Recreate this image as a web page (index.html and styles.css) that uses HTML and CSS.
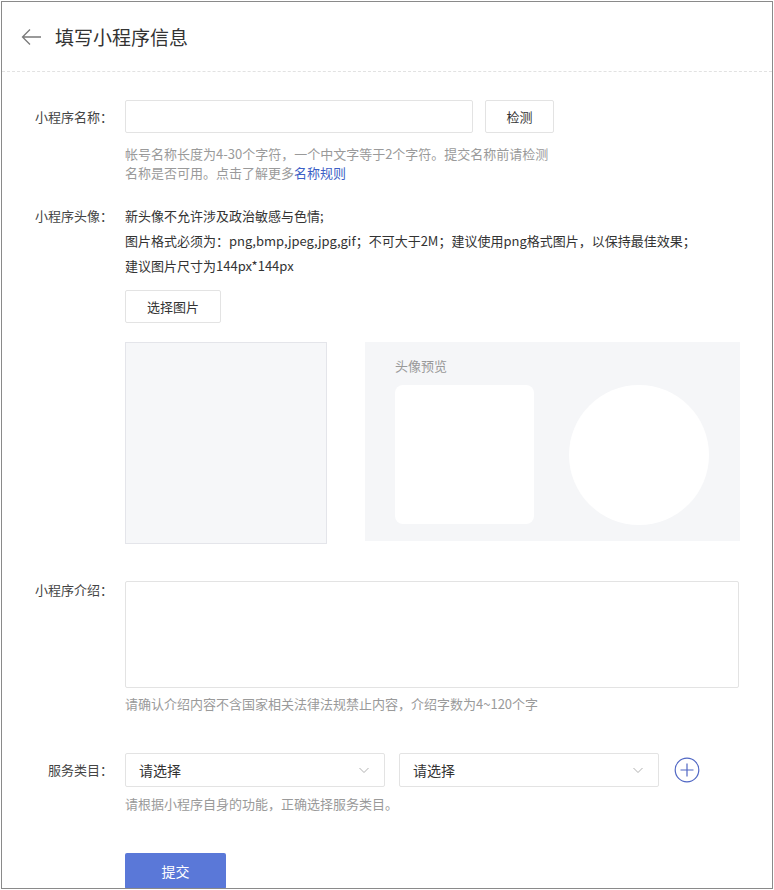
FILE: index.html
```html
<!DOCTYPE html>
<html lang="zh-CN">
<head>
<meta charset="utf-8">
<title>填写小程序信息</title>
<link rel="stylesheet" href="styles.css">
</head>
<body>
<div class="page">
  <div class="header">
    <svg class="back" width="22" height="18" viewBox="0 0 22 18"><path d="M21 9H2.5M10 1.5L2.5 9L10 16.5" fill="none" stroke="#7a7a7a" stroke-width="1.3"/></svg>
    <h1 class="title">填写小程序信息</h1>
  </div>
  <div class="form">
    <div class="row row-name">
      <div class="label label-input">小程序名称：</div>
      <div class="field">
        <div class="inline">
          <div class="input name-input"></div>
          <div class="btn btn-check">检测</div>
        </div>
        <p class="hint hint-name">帐号名称长度为4-30个字符，一个中文字等于2个字符。提交名称前请检测名称是否可用。点击了解更多<a class="link">名称规则</a></p>
      </div>
    </div>
    <div class="row row-avatar">
      <div class="label label-text">小程序头像：</div>
      <div class="field">
        <div class="avatar-desc">
          <p>新头像不允许涉及政治敏感与色情;</p>
          <p>图片格式必须为：png,bmp,jpeg,jpg,gif；不可大于2M；建议使用png格式图片，以保持最佳效果；</p>
          <p>建议图片尺寸为144px*144px</p>
        </div>
        <div class="btn btn-choose">选择图片</div>
        <div class="avatar-area">
          <div class="upload-box"></div>
          <div class="preview">
            <div class="preview-title">头像预览</div>
            <div class="preview-shapes">
              <div class="shape-square"></div>
              <div class="shape-circle"></div>
            </div>
          </div>
        </div>
      </div>
    </div>
    <div class="row row-intro">
      <div class="label label-area">小程序介绍：</div>
      <div class="field">
        <div class="textarea"></div>
        <p class="hint hint-intro">请确认介绍内容不含国家相关法律法规禁止内容，介绍字数为4~120个字</p>
      </div>
    </div>
    <div class="row row-service">
      <div class="label label-input">服务类目：</div>
      <div class="field">
        <div class="inline">
          <div class="select"><span>请选择</span><svg width="12" height="8" viewBox="0 0 12 8"><path d="M1.5 2L6 6.5L10.5 2" fill="none" stroke="#a8a8a8" stroke-width="0.9"/></svg></div>
          <div class="select select-second"><span>请选择</span><svg width="12" height="8" viewBox="0 0 12 8"><path d="M1.5 2L6 6.5L10.5 2" fill="none" stroke="#a8a8a8" stroke-width="0.9"/></svg></div>
          <svg class="add" width="26" height="26" viewBox="0 0 26 26"><circle cx="13" cy="13" r="11.8" fill="none" stroke="#5067c4" stroke-width="1.2"/><path d="M13 6.5V19.5M6.5 13H19.5" stroke="#5067c4" stroke-width="1.2"/></svg>
        </div>
        <p class="hint hint-service">请根据小程序自身的功能，正确选择服务类目。</p>
        <div class="btn-submit">提交</div>
      </div>
    </div>
  </div>
</div>
</body>
</html>
```
FILE: styles.css
```css
* { box-sizing: border-box; }
html, body { margin: 0; padding: 0; background: #fff; }
body { font-family: "Noto Sans CJK SC", "Microsoft YaHei", sans-serif; color: #333; font-size: 13px; }
p { margin: 0; }

.page {
  margin: 1px 0 0 1px;
  width: 772px;
  height: 888px;
  border: 1px solid #8a8a8a;
  overflow: hidden;
}

.header {
  height: 70px;
  border-bottom: 1px dashed #e2e2e2;
  display: flex;
  align-items: center;
  padding-left: 18px;
}
.back { display: block; }
.title {
  margin: 0 0 0 13px;
  font-size: 19px;
  font-weight: normal;
  color: #333;
  line-height: 24px;
}

.form { padding-top: 28px; }
.row { display: flex; }
.label {
  width: 111px;
  flex: none;
  text-align: right;
  color: #444;
  font-size: 13px;
  margin-right: 12px;
}
.label-input { line-height: 33px; }
.label-text { line-height: 25px; }
.label-area { line-height: 17px; }
.field { flex: none; }
.inline { display: flex; align-items: center; }

.input {
  width: 348px;
  height: 33px;
  border: 1px solid #e3e3e3;
  border-radius: 2px;
}
.btn {
  height: 33px;
  border: 1px solid #e3e3e3;
  border-radius: 2px;
  display: flex;
  align-items: center;
  justify-content: center;
  font-size: 13px;
  color: #333;
  background: #fff;
}
.btn-check { width: 69px; margin-left: 12px; }

.hint { color: #9a9a9a; font-size: 13px; line-height: 19px; }
.hint-name { width: 432px; margin-top: 11px; }
.link { color: #3d5fc6; text-decoration: none; }

.row-avatar { margin-top: 21px; }
.avatar-desc { line-height: 25px; font-size: 13px; color: #333; }
.btn-choose { width: 96px; margin-top: 12px; }
.avatar-area { display: flex; margin-top: 19px; }
.upload-box {
  width: 202px;
  height: 202px;
  background: #f6f7f9;
  border: 1px solid #e4e5ea;
}
.preview {
  width: 375px;
  height: 199px;
  margin-left: 38px;
  background: #f5f6f8;
  padding: 14px 0 0 30px;
}
.preview-title { color: #999; font-size: 13px; line-height: 19px; }
.preview-shapes { display: flex; margin-top: 10px; }
.shape-square { width: 139px; height: 139px; background: #fff; border-radius: 8px; }
.shape-circle { width: 140px; height: 140px; background: #fff; border-radius: 50%; margin-left: 35px; }

.row-intro { margin-top: 37px; }
.textarea {
  width: 614px;
  height: 107px;
  border: 1px solid #e3e3e3;
  border-radius: 2px;
}
.hint-intro { margin-top: 6px; }

.row-service { margin-top: 40px; }
.select {
  width: 260px;
  height: 34px;
  border: 1px solid #e3e3e3;
  border-radius: 2px;
  display: flex;
  align-items: center;
  justify-content: space-between;
  padding: 0 14px 0 13px;
  font-size: 14px;
  color: #333;
}
.select-second { margin-left: 14px; }
.add { display: block; margin-left: 15px; }
.hint-service { margin-top: 7px; }

.btn-submit {
  width: 101px;
  height: 36px;
  margin-top: 40px;
  background: #5a78d8;
  color: #fff;
  font-size: 14px;
  border-radius: 2px;
  display: flex;
  align-items: center;
  justify-content: center;
}
```
